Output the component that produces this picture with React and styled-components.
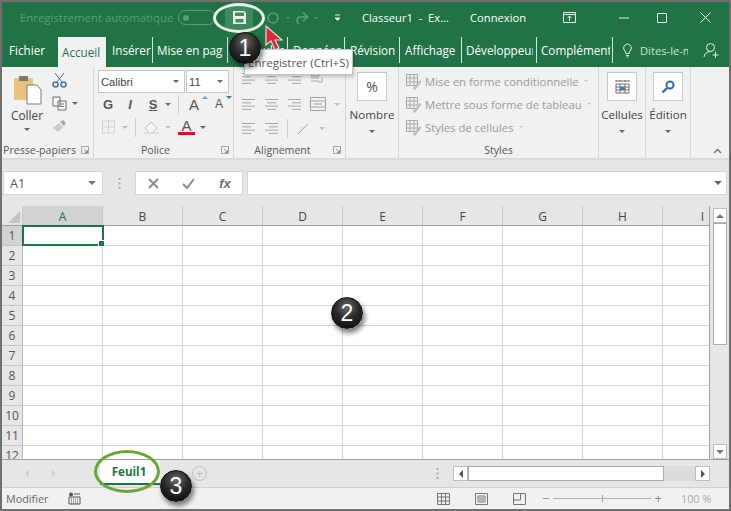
import React from "react";
import styled, { createGlobalStyle } from "styled-components";

const Global = createGlobalStyle`
  html, body { margin: 0; padding: 0; background: #fff; }
  * { box-sizing: border-box; }
  #root { width: 731px; height: 511px; overflow: hidden; }
`;
const FONT = `"Open Sans", "Noto Sans", "Liberation Sans", sans-serif`;

const Win = styled.div`
  position: relative; width: 731px; height: 511px; border: 2px solid #6f6f6f;
  display: flex; flex-direction: column; overflow: hidden; font-family: ${FONT}; background: #e6e6e6;
`;
const TitleBar = styled.div`height: 31px; background: #217346; display: flex; align-items: center; flex: none; position: relative;`;
const AutoLabel = styled.span`margin-left: 18px; width: 158px; font-size: 11.4px; color: #5d9c79; white-space: nowrap;`;
const Toggle = styled.span`
  width: 38px; height: 15px; border: 1px solid #5d9c79; border-radius: 8px; display: flex; align-items: center; padding-left: 4px;
  &::before { content: ""; width: 6px; height: 6px; border-radius: 50%; background: #5d9c79; }
`;
const SaveBtn = styled.span`margin-left: 9px; width: 28px; height: 26px; background: #3f8b60; display: flex; align-items: center; justify-content: center;`;
const QatIcon = styled.span`margin-left: ${p => p.$ml}px; display: flex; align-items: center;`;
const TitleText = styled.span`margin-left: ${p => p.$ml}px; width: ${p => p.$w}px; color: #fff; font-size: 11.2px; white-space: nowrap;`;

const TabBar = styled.div`height: 34px; background: #217346; display: flex; align-items: flex-end; flex: none;`;
const Tab = styled.div`
  width: ${p => p.$w}px; height: ${p => p.$active ? 30 : 26}px; margin-bottom: ${p => p.$active ? 0 : 4}px;
  padding-left: ${p => p.$pl}px; overflow: hidden; white-space: nowrap; font-size: 11.7px;
  display: flex; align-items: center;
  color: ${p => p.$active ? "#217346" : "#fff"}; background: ${p => p.$active ? "#f1f1f1" : "transparent"};
  border-right: ${p => p.$sep ? "1px solid #d7e6dd" : "none"};
`;
const TabLabel = styled.span`display: block; overflow: hidden; white-space: nowrap; ${p => p.$clip ? `width: ${p.$clip}px;` : ""}`;
const TellMe = styled.div`margin: 0 0 4px 9px; height: 26px; display: flex; align-items: center; gap: 7px; font-size: 11.2px; color: #cfe3d7; width: 66px; overflow: hidden; white-space: nowrap; flex: none;`;

const Ribbon = styled.div`height: 93px; background: #f1f1f1; border-bottom: 2px solid #dadada; display: flex; flex: none; position: relative;`;
const Group = styled.div`
  width: ${p => p.$w}px; height: 91px; border-right: ${p => p.$end ? "none" : "1px solid #d4d4d4"}; display: flex; flex-direction: column; flex: none; position: relative;
`;
const GroupBody = styled.div`flex: 1; min-height: 0; display: flex;`;
const GroupLabel = styled.div`
  height: 15px; font-size: 10.6px; color: #555; text-align: center; white-space: nowrap; position: relative; line-height: 15px;
  padding-right: ${p => p.$pr ?? 0}px;
`;
const Launcher = styled.span`position: absolute; right: 4px; top: 3px; width: 8px; height: 8px; display: flex;`;
const PasteCol = styled.div`width: 50px; padding-top: 7px; display: flex; flex-direction: column; align-items: center; font-size: 11.8px; color: #444;`;
const PasteName = styled.span`margin-top: 2px; line-height: 16px;`;
const SmallCol = styled.div`padding-top: 5px; display: flex; flex-direction: column; gap: 8px; align-items: flex-start;`;
const IconRow = styled.div`display: flex; align-items: center; gap: ${p => p.$gap ?? 8}px; height: ${p => p.$h ?? 16}px; margin: ${p => p.$m ?? "0"};`;
const Caret = styled.span`
  width: 0; height: 0; flex: none; margin-left: ${p => p.$ml ?? 0}px;
  border-left: ${p => p.$s ?? 3}px solid transparent; border-right: ${p => p.$s ?? 3}px solid transparent;
  border-top: ${p => p.$s ?? 3}px solid ${p => p.$c ?? "#666"};
`;
const PoliceBody = styled.div`display: flex; flex-direction: column; padding: 3px 0 0 4px;`;
const SelectRow = styled.div`display: flex; gap: 1px; height: 23px; margin-bottom: 3px;`;
const Select = styled.div`
  width: ${p => p.$w}px; background: #fff; border: 1px solid #c6c6c6; font-size: 11.2px; color: #444;
  display: flex; align-items: center; justify-content: space-between; padding: 0 5px 0 2px; font-family: "Liberation Sans", sans-serif;
`;
const Letter = styled.span`
  width: ${p => p.$w ?? 14}px; margin-left: ${p => p.$ml ?? 0}px; text-align: center; font-family: "Liberation Sans", sans-serif;
  font-size: ${p => p.$size ?? 13}px; line-height: 15px; color: ${p => p.$c ?? "#555"}; font-weight: ${p => p.$b ? 700 : 400};
  font-style: ${p => p.$i ? "italic" : "normal"}; text-decoration: ${p => p.$u ? "underline" : "none"};
`;
const FontColorA = styled(Letter)`border-bottom: 3px solid #e0101a; line-height: 13px;`;
const VSep = styled.span`width: 1px; height: 19px; background: #d0d0d0; margin: 0 ${p => p.$m ?? 6}px; flex: none;`;
const AlignBody = styled.div`display: flex; flex-direction: column; padding: 5px 0 0 7px; gap: 7px;`;
const CmdCol = styled.div`width: 100%; padding-top: 5px; display: flex; flex-direction: column; align-items: center; font-size: 11.6px; color: #444;`;
const CmdBox = styled.div`width: 30px; height: 29px; background: #fff; border: 1px solid #c9c9c9; display: flex; align-items: center; justify-content: center; font-size: 14px; color: #555; margin-bottom: 6px;`;
const CmdLabel = styled.span`line-height: 16px; margin-bottom: 7px; white-space: nowrap;`;
const StyleList = styled.div`padding: 4px 0 0 6px; display: flex; flex-direction: column; gap: 3px;`;
const StyleRow = styled.div`height: 20px; display: flex; align-items: center; gap: 3px; font-size: 11.3px; color: #9b9b9b; white-space: nowrap;`;
const Collapse = styled.span`position: absolute; right: 7px; bottom: 4px; display: flex;`;

const FormulaBar = styled.div`height: 46px; flex: none; background: #e6e6e6; display: flex; align-items: center; padding: 0 2px 0 1px;`;
const NameBox = styled.div`width: 100px; height: 24px; background: #fff; border: 1px solid #d4d4d4; display: flex; align-items: center; justify-content: space-between; padding: 0 6px; font-size: 12.5px; color: #555;`;
const Dots = styled.span`width: 32px; display: flex; justify-content: center;`;
const FxBox = styled.div`width: 108px; height: 24px; background: #fff; border: 1px solid #d4d4d4; display: flex; align-items: center; justify-content: space-between; padding: 0 9px 0 12px;`;
const FxInput = styled.div`margin-left: 4px; flex: 1; height: 24px; background: #fff; border: 1px solid #d4d4d4; display: flex; align-items: center; justify-content: flex-end; padding-right: 4px;`;

const SheetArea = styled.div`height: 254px; flex: none; display: flex; border-bottom: 1px solid #9f9f9f;`;
const GridWrap = styled.div`width: 708px; flex: none; overflow: hidden; background: #fff; border-right: 1px solid #9f9f9f; position: relative;`;
const Grid = styled.div`display: grid; grid-template-columns: 21px repeat(9, 80px); grid-auto-rows: 20px; width: 741px;`;
const Corner = styled.div`background: #e6e6e6; border-bottom: 1px solid #9f9f9f; border-right: 1px solid #c8c8c8; position: relative;
  &::after { content: ""; position: absolute; right: 2px; bottom: 2px; border-left: 12px solid transparent; border-bottom: 12px solid #c4c4c4; }
`;
const ColHead = styled.div`
  background: ${p => p.$sel ? "#d2d2d2" : "#e6e6e6"}; color: ${p => p.$sel ? "#217346" : "#444"};
  border-right: 1px solid #c6c6c6; border-bottom: 1px solid #9f9f9f; font-size: 12px; display: flex; align-items: center; justify-content: center; padding-top: 1px;
`;
const RowHead = styled.div`
  background: ${p => p.$sel ? "#d2d2d2" : "#e6e6e6"}; color: ${p => p.$sel ? "#217346" : "#555"};
  border-right: 1px solid #b8b8b8; border-bottom: 1px solid #c6c6c6; font-size: 12px; display: flex; align-items: center; justify-content: center;
`;
const Cell = styled.div`border-right: 1px solid #d4d4d4; border-bottom: 1px solid #d4d4d4; position: relative;`;
const Selected = styled.div`
  position: absolute; left: -1px; top: -1px; width: 82px; height: 21px; border: 2px solid #217346; z-index: 1;
  &::after { content: ""; position: absolute; right: -3px; bottom: -3px; width: 5px; height: 5px; background: #217346; border: 1px solid #fff; }
`;
const VScroll = styled.div`flex: 1; display: flex; flex-direction: column; padding: 2px 2px 0 3px; background: #e6e6e6;`;
const ScrollBtn = styled.div`height: 15px; flex: none; background: #fff; border: 1px solid #bcbcbc; display: flex; align-items: center; justify-content: center;`;
const VThumb = styled.div`height: 122px; flex: none; background: #fff; border: 1px solid #ababab;`;
const Track = styled.div`flex: 1;`;

const SheetBar = styled.div`height: 27px; flex: none; background: #e6e6e6; display: flex; align-items: center;`;
const NavArrow = styled.span`margin-left: ${p => p.$ml}px; display: flex;`;
const SheetTab = styled.div`margin-left: ${p => p.$ml}px; align-self: flex-start; width: 60px; height: 25px; padding-right: 2px; background: #fff; color: #217346; font-weight: 700; font-size: 11.6px; border-bottom: 2px solid #217346; display: flex; align-items: center; justify-content: center;`;
const AddSheet = styled.span`margin-left: 32px; width: 15px; height: 15px; border: 1.5px solid #c0c0c0; border-radius: 50%; color: #c0c0c0; display: flex; align-items: center; justify-content: center; font-size: 12px; line-height: 1;`;
const HScroll = styled.div`margin-left: 14px; width: 257px; height: 15px; display: flex; align-items: stretch;`;
const HBtn = styled(ScrollBtn)`width: 15px; height: 15px;`;
const HThumb = styled.div`width: 196px; background: #fff; border: 1px solid #ababab;`;
const HTrack = styled.div`width: 31px; background: #dcdcdc;`;

const StatusBar = styled.div`height: 22px; flex: none; background: #f1f1f1; border-top: 1px solid #d0d0d0; display: flex; align-items: center; font-size: 10.8px; color: #666;`;
const StatusText = styled.span`margin-left: ${p => p.$ml}px; width: ${p => p.$w}px; white-space: nowrap; color: ${p => p.$c ?? "#666"};`;
const StatusIcon = styled.span`margin-left: ${p => p.$ml}px; display: flex;`;
const Zoom = styled.div`margin-left: 16px; width: 120px; display: flex; align-items: center; gap: 4px; color: #888; font-size: 13px; line-height: 1;`;
const ZoomLine = styled.div`flex: 1; height: 1px; background: #b0b0b0; position: relative;
  &::after { content: ""; position: absolute; left: 50%; top: -3px; width: 1px; height: 7px; background: #a0a0a0; }
`;

const Badge = styled.div`
  position: absolute; left: ${p => p.$x - 16}px; top: ${p => p.$y - 16}px; width: 32px; height: 32px; border-radius: 50%;
  background: radial-gradient(circle at 50% 30%, #6a6a6a 0%, #2a2a2a 45%, #050505 100%); border: 1px solid #111;
  box-shadow: 2px 4px 5px rgba(0,0,0,.5); color: #fff; font-family: "Liberation Sans", sans-serif; font-size: 23px; display: flex; align-items: center; justify-content: center; z-index: 5;
`;
const Oval = styled.div`
  position: absolute; left: ${p => p.$x}px; top: ${p => p.$y}px; width: ${p => p.$w}px; height: ${p => p.$h}px; border-radius: 50%;
  border: 3px solid ${p => p.$c}; z-index: 4;
`;
const Tooltip = styled.div`
  position: absolute; left: 242px; top: 47px; width: 109px; height: 26px; background: #fff; border: 1px solid #c4c4c4; box-shadow: 1px 2px 3px rgba(0,0,0,.2);
  font-size: 11.5px; color: #555; display: flex; align-items: center; justify-content: center; white-space: nowrap; z-index: 3;
`;
const Pointer = styled.svg`position: absolute; left: 263px; top: 23px; z-index: 6;`;

const Ico = ({ w = 14, h = 14, children, vb }) => (
  <svg width={w} height={h} viewBox={vb ?? `0 0 ${w} ${h}`} fill="none" style={{ display: "block", flex: "none" }}>{children}</svg>
);
const Lines = ({ rows, c = "#a4a4a4" }) => (
  <Ico w={15} h={13}>{rows.map(([x1, x2], i) => <path key={i} d={`M${x1} ${1.5 + i * 3.3}H${x2}`} stroke={c} />)}</Ico>
);
const L = [[1, 14], [1, 10], [1, 14], [1, 10]];
const C = [[1, 14], [3, 12], [1, 14], [3, 12]];
const R = [[1, 14], [5, 14], [1, 14], [5, 14]];
const Launch = () => <Launcher><Ico w={8} h={8}><path d="M.5 7.5V.5h7v7z" stroke="#a5a5a5" /><path d="M3 3l3.5 3.5M6.5 4v2.5H4" stroke="#8a8a8a" /></Ico></Launcher>;
const TableIco = ({ c = "#a8a8a8" }) => (
  <Ico w={17} h={17}><path d="M1.5 1.5h11v11h-11zM1.5 5h11M1.5 9h11M5 1.5v11M9 1.5v11" stroke={c} /><path d="M8 15l7-8 1.5 1.5-6 8H8z" fill="#bdbdbd" /></Ico>
);

const cols = ["A", "B", "C", "D", "E", "F", "G", "H", "I"];
const rows = Array.from({ length: 12 }, (_, i) => i + 1);

export default function App() {
  return (
    <Win>
      <Global />
      <TitleBar>
        <AutoLabel>Enregistrement automatique</AutoLabel>
        <Toggle />
        <SaveBtn>
          <Ico w={15} h={15}><path d="M1 1h11l2 2v11H1z" fill="#e9f3ed" /><path d="M3 2.500h9v3.500H3z" fill="#3f8b60" /><path d="M3.500 9h8v3.500h-8z" fill="#3f8b60" /></Ico>
        </SaveBtn>
        <QatIcon $ml={13}><Ico w={14} h={14}><circle cx="7" cy="7" r="5" stroke="#5d9c79" strokeWidth="1.6" /></Ico></QatIcon>
        <QatIcon $ml={6}><Caret $c="#5d9c79" $s={2} /></QatIcon>
        <QatIcon $ml={3}><Ico w={16} h={14}><path d="M14 6H6a4 4 0 0 0 0 7M10 1.500 14.500 6 10 10.500" stroke="#5d9c79" strokeWidth="1.7" /></Ico></QatIcon>
        <QatIcon $ml={5}><Caret $c="#5d9c79" $s={2} /></QatIcon>
        <QatIcon $ml={16}><Ico w={7} h={7}><path d="M1 1h5M1 4h5L3.500 6.500z" stroke="#e8f2ec" fill="#e8f2ec" /></Ico></QatIcon>
        <TitleText $ml={21} $w={86}>Classeur1&nbsp; -&nbsp; Ex...</TitleText>
        <TitleText $ml={22} $w={67}>Connexion</TitleText>
        <QatIcon $ml={26}><Ico w={13} h={11}><path d="M.5.5h12v10H.5zM.5 2.500h12M6.500 9V4M4.500 6l2-2 2 2" stroke="#e6f0ea" /></Ico></QatIcon>
        <QatIcon $ml={43}><Ico w={10} h={2}><path d="M0 1h10" stroke="#e6f0ea" /></Ico></QatIcon>
        <QatIcon $ml={28}><Ico w={10} h={10}><path d="M.5.5h9v9h-9z" stroke="#e6f0ea" /></Ico></QatIcon>
        <QatIcon $ml={33}><Ico w={11} h={11}><path d="M.5.5l10 10M10.500.5l-10 10" stroke="#e6f0ea" /></Ico></QatIcon>
      </TitleBar>

      <TabBar>
        <Tab $w={56} $pl={7}>Fichier</Tab>
        <Tab $w={48} $pl={4} $active>Accueil</Tab>
        <Tab $w={47} $pl={6} $sep>Insérer</Tab>
        <Tab $w={75} $pl={4} $sep><TabLabel $clip={66}>Mise en page</TabLabel></Tab>
        <Tab $w={60} $pl={6} $sep>Formules</Tab>
        <Tab $w={57} $pl={5} $sep>Données</Tab>
        <Tab $w={55} $pl={5} $sep>Révision</Tab>
        <Tab $w={62} $pl={5} $sep>Affichage</Tab>
        <Tab $w={75} $pl={4} $sep><TabLabel $clip={67}>Développeur</TabLabel></Tab>
        <Tab $w={76} $pl={4} $sep><TabLabel $clip={69}>Compléments</TabLabel></Tab>
        <TellMe>
          <Ico w={11} h={15}><path d="M5.500 1a4 4 0 0 0-2.500 7c.6.600.8 1.500.8 2.500h3.400c0-1 .2-1.900.8-2.500A4 4 0 0 0 5.500 1zM4 12.500h3M4.500 14h2" stroke="#e6f0ea" /></Ico>
          Dites-le-moi
        </TellMe>
        <QatIcon $ml={15} style={{ marginBottom: 8 }}><Ico w={17} h={17}><circle cx="7.500" cy="5.500" r="4" stroke="#e6f0ea" /><path d="M1 15c.5-3.500 3-5.500 6.500-5.500M12.500 10v6M9.500 13h6" stroke="#e6f0ea" /></Ico></QatIcon>
      </TabBar>

      <Ribbon>
        <Group $w={92}>
          <GroupBody>
            <PasteCol>
              <Ico w={29} h={31}>
                <path d="M1 4h19v22H1z" fill="#e9c27c" /><path d="M6 2h9v5H6z" fill="#77797b" />
                <path d="M14 11h10l4 5v14H14z" fill="#fff" stroke="#7b7b7b" />
              </Ico>
              <PasteName>Coller</PasteName>
              <Caret style={{ marginTop: 5 }} />
            </PasteCol>
            <SmallCol>
              <Ico w={15} h={16}><path d="M3 1l7 9M12 1 5 10" stroke="#6d6d6d" /><circle cx="3.500" cy="12.500" r="2.500" stroke="#3f78b4" strokeWidth="1.500" /><circle cx="11.500" cy="12.500" r="2.500" stroke="#3f78b4" strokeWidth="1.500" /></Ico>
              <IconRow $h={15} $gap={5}>
                <Ico w={15} h={15}><path d="M1 1h7v9H1zM6 5h8v9H6zM8 8h4M8 10.500h4" stroke="#6d6d6d" fill="#f8f8f8" /></Ico>
                <Caret />
              </IconRow>
              <Ico w={15} h={14}><path d="M1 9l6-5 4 4-5 5z" fill="#c9c9c9" /><path d="M8 3l3-2 3 3-2 3z" fill="#a9a9a9" /></Ico>
            </SmallCol>
          </GroupBody>
          <GroupLabel $pr={16}>Presse-papiers<Launch /></GroupLabel>
        </Group>

        <Group $w={140}>
          <PoliceBody>
            <SelectRow>
              <Select $w={87}>Calibri<Caret /></Select>
              <Select $w={43}>11<Caret /></Select>
            </SelectRow>
            <IconRow $gap={0}>
              <Letter $b $ml={3}>G</Letter>
              <Letter $i $b $ml={8}>I</Letter>
              <Letter $u $b $ml={9}>S</Letter>
              <Caret $ml={5} />
              <VSep $m={7} />
              <Letter $size={15} $w={16}>A</Letter>
              <Caret $c="#7a9cc0" style={{ transform: "rotate(180deg)", alignSelf: "flex-start" }} />
              <Letter $size={12} $ml={4} $w={14}>A</Letter>
              <Caret $c="#3f78b4" style={{ alignSelf: "flex-start" }} />
            </IconRow>
            <IconRow $gap={0} $m="7px 0 0 4px">
              <Ico w={13} h={14}><path d="M.5 1h12v12H.5z M.5 7h12M6.500 1v12" stroke="#b5b5b5" strokeDasharray="1 1" /></Ico>
              <Caret $ml={7} $c="#bbb" />
              <VSep $m={7} />
              <Ico w={17} h={15}><path d="M2 8l6-6 6 6-6 6z" stroke="#bdbdbd" fill="#f6f6f6" /><path d="M1 13h15" stroke="#ddd" strokeWidth="2" /></Ico>
              <Caret $ml={5} $c="#bbb" />
              <FontColorA $size={15} $ml={7} $w={17}>A</FontColorA>
              <Caret $ml={5} />
            </IconRow>
          </PoliceBody>
          <GroupBody />
          <GroupLabel $pr={16}>Police<Launch /></GroupLabel>
        </Group>

        <Group $w={112}>
          <AlignBody>
            <IconRow $gap={8} $h={13}>
              <Lines rows={L} /><Lines rows={C} /><Lines rows={R} />
              <Ico w={15} h={13}><path d="M1 1h8v3H1zM1 6h8M1 9h8M12 6v4H8" stroke="#a4a4a4" /></Ico>
            </IconRow>
            <IconRow $gap={8} $h={14} $m="5px 0 0 0">
              <Lines rows={L} /><Lines rows={C} /><Lines rows={R} />
              <Ico w={16} h={14}><path d="M.5.500h15v13H.5zM.5 4h15M.5 10h15M4 7h8" stroke="#a4a4a4" /></Ico>
              <Caret $c="#bbb" />
            </IconRow>
            <IconRow $gap={8} $h={15} $m="3px 0 0 0">
              <Lines rows={L} /><Lines rows={R} />
              <VSep $m={0} />
              <Ico w={15} h={14}><path d="M2 12 12 2M6 5l2 2" stroke="#a4a4a4" /></Ico>
              <Caret $c="#bbb" />
            </IconRow>
          </AlignBody>
          <GroupBody />
          <GroupLabel $pr={14}>Alignement<Launch /></GroupLabel>
        </Group>

        <Group $w={53}>
          <CmdCol><CmdBox>%</CmdBox><CmdLabel>Nombre</CmdLabel><Caret /></CmdCol>
          <GroupBody />
        </Group>

        <Group $w={200}>
          <StyleList>
            <StyleRow><TableIco />Mise en forme conditionnelle<Caret $c="#c4c4c4" $ml={2} $s={2} /></StyleRow>
            <StyleRow><TableIco />Mettre sous forme de tableau<Caret $c="#c4c4c4" $ml={2} $s={2} /></StyleRow>
            <StyleRow><TableIco />Styles de cellules<Caret $c="#c4c4c4" $ml={2} $s={2} /></StyleRow>
          </StyleList>
          <GroupBody />
          <GroupLabel>Styles</GroupLabel>
        </Group>

        <Group $w={47}>
          <CmdCol>
            <CmdBox><Ico w={15} h={16}><path d="M1 1v2M5 1v2M10 1v2M14 1v2M1 2h13M1 5h13v9H1zM1 8h13M1 11h13M5 5v9M10 5v9" stroke="#6d6d6d" /><path d="M5 8h5v3H5z" fill="#3f78b4" /></Ico></CmdBox>
            <CmdLabel>Cellules</CmdLabel><Caret />
          </CmdCol>
        </Group>
        <Group $w={45}>
          <CmdCol>
            <CmdBox><Ico w={14} h={14}><circle cx="9" cy="5" r="3.500" stroke="#2f6fb0" strokeWidth="2" /><path d="M6 8l-4.500 4.500" stroke="#2f6fb0" strokeWidth="2.400" /></Ico></CmdBox>
            <CmdLabel>Édition</CmdLabel><Caret />
          </CmdCol>
        </Group>
        <Collapse><Ico w={9} h={6}><path d="M1 5l3.500-3.500L8 5" stroke="#777" strokeWidth="1.500" /></Ico></Collapse>
      </Ribbon>

      <FormulaBar>
        <NameBox>A1<Caret $s={4} $c="#777" /></NameBox>
        <Dots><Ico w={3} h={13}><path d="M1.500 1v2M1.500 5.500v2M1.500 10v2" stroke="#aaa" strokeWidth="2" /></Ico></Dots>
        <FxBox>
          <Ico w={11} h={11}><path d="M1 1l9 9M10 1l-9 9" stroke="#8a8a8a" strokeWidth="1.800" /></Ico>
          <Ico w={13} h={11}><path d="M1 6l4 4 7-9" stroke="#8a8a8a" strokeWidth="2" /></Ico>
          <Letter $i $b $size={13} $c="#6f6f6f" $w={16}>fx</Letter>
        </FxBox>
        <FxInput><Caret $s={4} $c="#666" /></FxInput>
      </FormulaBar>

      <SheetArea>
        <GridWrap>
          <Grid>
            <Corner />
            {cols.map((c, i) => <ColHead key={c} $sel={i === 0}>{c}</ColHead>)}
            {rows.map(r => (
              <React.Fragment key={r}>
                <RowHead $sel={r === 1}>{r}</RowHead>
                {cols.map((c, i) => (
                  <Cell key={c}>{r === 1 && i === 0 && <Selected />}</Cell>
                ))}
              </React.Fragment>
            ))}
          </Grid>
        </GridWrap>
        <VScroll>
          <ScrollBtn><Caret $s={4} $c="#777" style={{ transform: "rotate(180deg)" }} /></ScrollBtn>
          <VThumb />
          <Track />
          <ScrollBtn><Caret $s={4} $c="#777" /></ScrollBtn>
        </VScroll>
      </SheetArea>

      <SheetBar>
        <NavArrow $ml={22}><Ico w={6} h={9}><path d="M5 .5v8L1 4.500z" fill="#cfcfcf" /></Ico></NavArrow>
        <NavArrow $ml={21}><Ico w={6} h={9}><path d="M1 .5v8l4-4z" fill="#cfcfcf" /></Ico></NavArrow>
        <SheetTab $ml={43}>Feuil1</SheetTab>
        <AddSheet>+</AddSheet>
        <NavArrow $ml={229}><Ico w={3} h={13}><path d="M1.500 1v2M1.500 5.500v2M1.500 10v2" stroke="#aaa" strokeWidth="2" /></Ico></NavArrow>
        <HScroll>
          <HBtn><Caret $s={4} $c="#555" style={{ transform: "rotate(90deg)" }} /></HBtn>
          <HThumb />
          <HTrack />
          <HBtn><Caret $s={4} $c="#555" style={{ transform: "rotate(-90deg)" }} /></HBtn>
        </HScroll>
      </SheetBar>

      <StatusBar>
        <StatusText $ml={4} $w={62}>Modifier</StatusText>
        <StatusIcon $ml={0}><Ico w={13} h={13}><circle cx="3" cy="2.500" r="2" fill="#555" /><path d="M6 2h6M1 5h11v7H1z" stroke="#555" /><path d="M3 7h7M3 9h7M3 11h7" stroke="#555" strokeDasharray="1 1" /></Ico></StatusIcon>
        <StatusIcon $ml={356}><Ico w={13} h={12}><path d="M.5.500h12v11H.5zM.5 4h12M.5 8h12M4.500.5v11M8.500.5v11" stroke="#777" /></Ico></StatusIcon>
        <StatusIcon $ml={25}><Ico w={13} h={12}><path d="M.5.500h12v11H.5zM3 3h7v6H3zM4 5h5M4 7h5" stroke="#777" /></Ico></StatusIcon>
        <StatusIcon $ml={25}><Ico w={13} h={12}><path d="M.5.500h12v11H.5zM.5 7h7V.5" stroke="#777" /></Ico></StatusIcon>
        <Zoom>−<ZoomLine />+</Zoom>
        <StatusText $ml={19} $w={30} $c="#a8a8a8">100 %</StatusText>
      </StatusBar>

      <Tooltip>Enregistrer (Ctrl+S)</Tooltip>
      <Oval $x={211} $y={1} $w={52} $h={30} $c="#e9f1e4" />
      <Pointer width="18" height="28" viewBox="0 0 18 28">
        <path d="M1 1l0 19 5-4 4 9 4-2-4-8h7z" fill="#d8263a" stroke="#f0d8d8" strokeWidth="1.200" />
      </Pointer>
      <Badge $x={243} $y={46}>1</Badge>
      <Badge $x={345} $y={311}>2</Badge>
      <Oval $x={92} $y={448} $w={66} $h={43} $c="#6aa53a" />
      <Badge $x={174} $y={484}>3</Badge>
    </Win>
  );
}
